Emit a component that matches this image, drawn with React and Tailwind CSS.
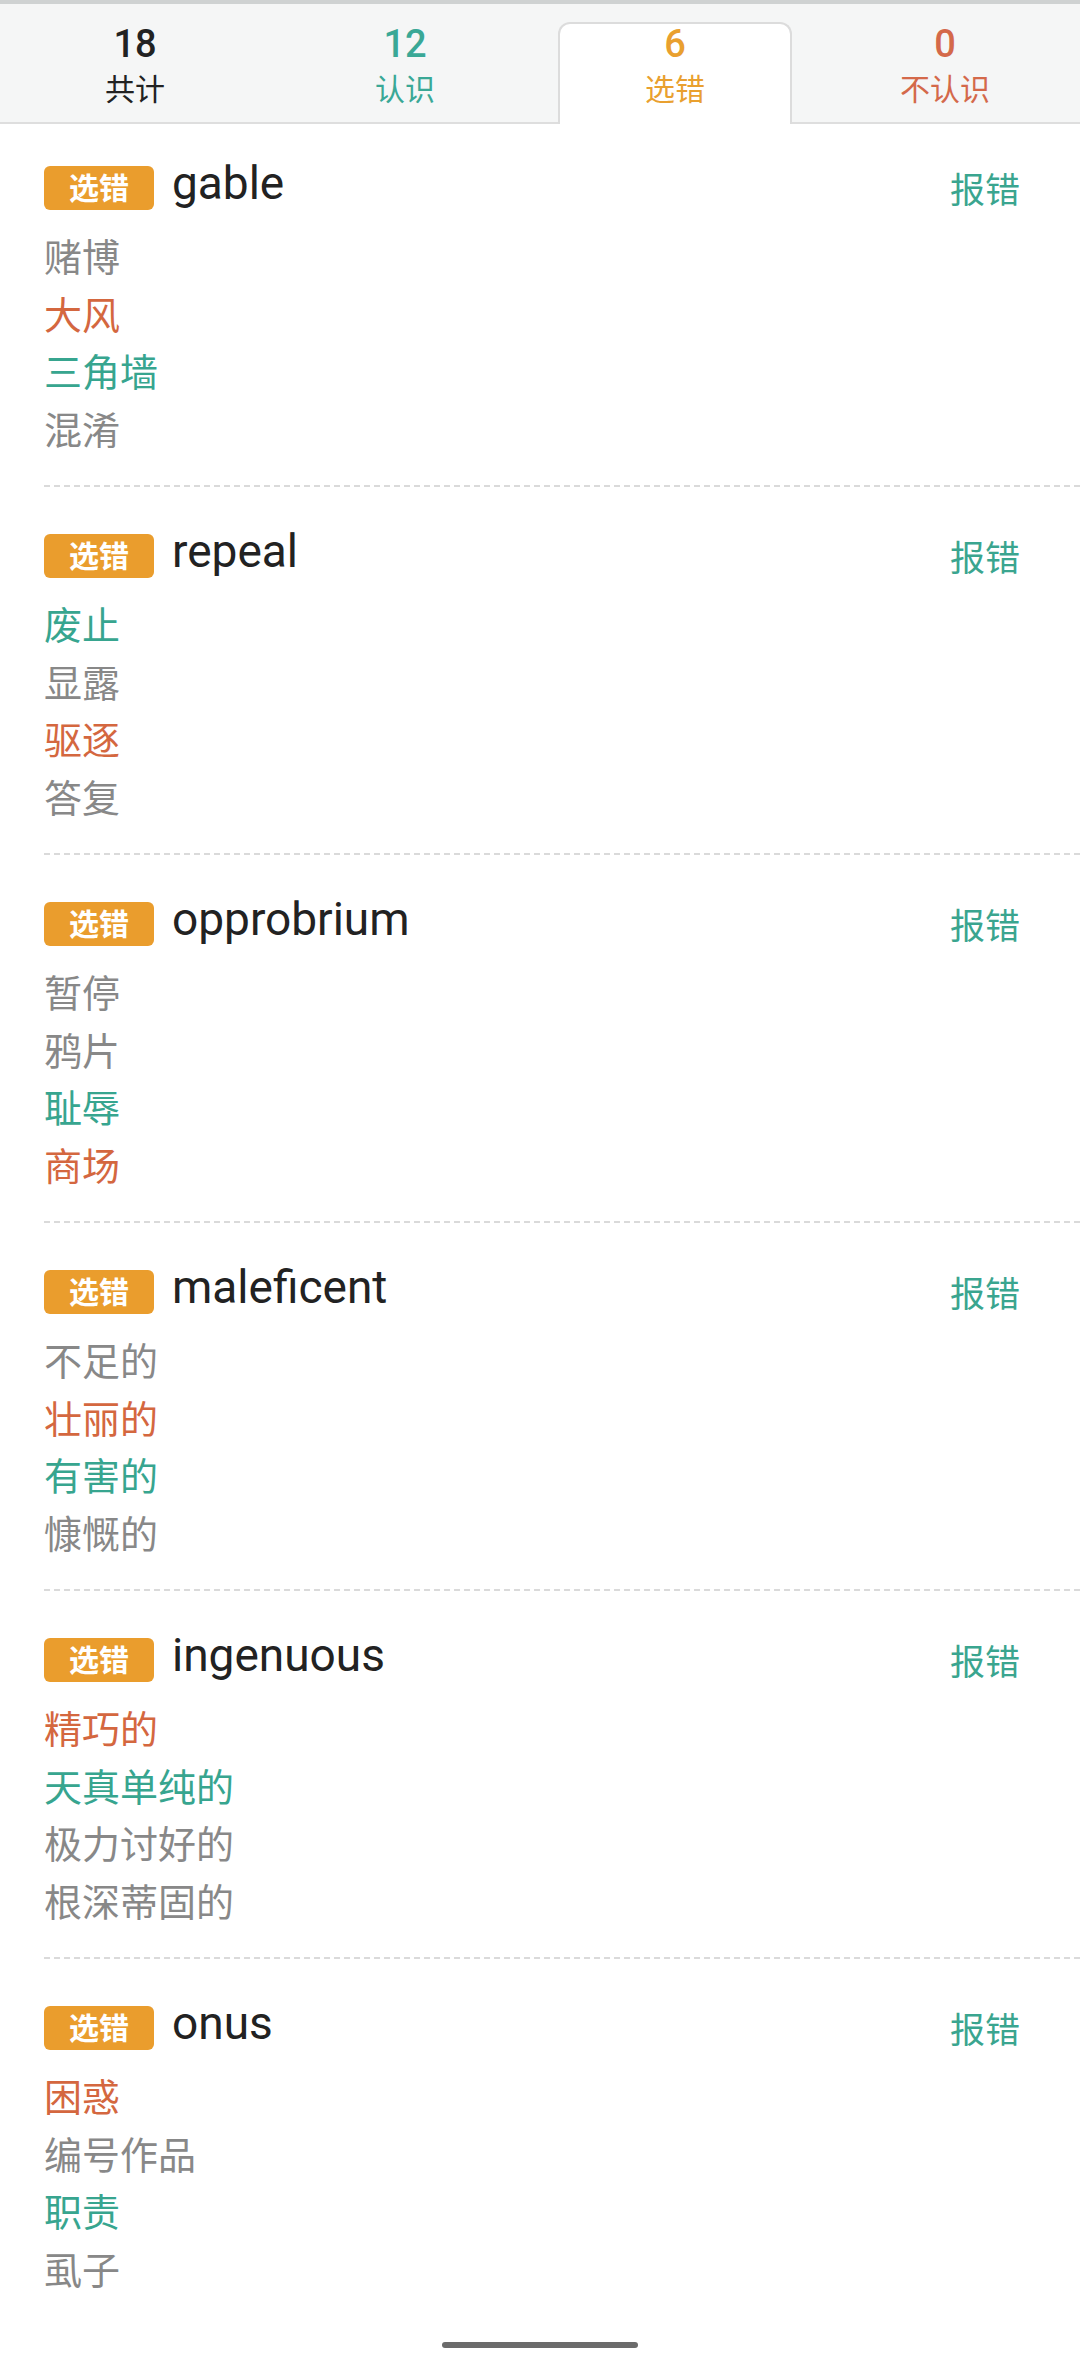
const tabs = [
  { count: 18, label: '共计', color: 'text-[#222222]' },
  { count: 12, label: '认识', color: 'text-[#3aa896]' },
  { count: 6, label: '选错', color: 'text-[#e9a02f]', active: true },
  { count: 0, label: '不认识', color: 'text-[#d4694a]' },
];

const G = 'text-[#888888]';
const R = 'text-[#d4673f]';
const T = 'text-[#37a58f]';

const words = [
  { word: 'gable', meanings: [['赌博', G], ['大风', R], ['三角墙', T], ['混淆', G]] },
  { word: 'repeal', meanings: [['废止', T], ['显露', G], ['驱逐', R], ['答复', G]] },
  { word: 'opprobrium', meanings: [['暂停', G], ['鸦片', G], ['耻辱', T], ['商场', R]] },
  { word: 'maleficent', meanings: [['不足的', G], ['壮丽的', R], ['有害的', T], ['慷慨的', G]] },
  { word: 'ingenuous', meanings: [['精巧的', R], ['天真单纯的', T], ['极力讨好的', G], ['根深蒂固的', G]] },
  { word: 'onus', meanings: [['困惑', R], ['编号作品', G], ['职责', T], ['虱子', G]] },
];

const font = { fontFamily: 'Roboto, "Noto Sans CJK SC", sans-serif' };

const WordCard = ({ item, first }) => (
  <div className={`ml-[44px] pr-[60px] pb-[25px] ${first ? 'pt-[42px]' : 'pt-[47px] border-t-2 border-dashed border-[#dadada]'}`}>
    <div className="flex items-center h-[44px]">
      <span className="w-[110px] h-[44px] rounded-[6px] bg-[#ea9d2d] text-white text-[30px] font-bold flex items-center justify-center">
        选错
      </span>
      <span className="ml-[18px] mb-[10px] text-[46px] text-[#222222] leading-none">{item.word}</span>
      <span className="ml-auto mt-[8px] text-[35px] text-[#3aa58f]">报错</span>
    </div>
    <div className="mt-[20px]">
      {item.meanings.map(([m, c]) => (
        <div key={m} className={`text-[38px] leading-[57.5px] ${c}`}>{m}</div>
      ))}
    </div>
  </div>
);

export default function App() {
  return (
    <div className="w-[1080px] min-h-[2365px] bg-white relative" style={font}>
      {/* header tabs */}
      <div className="h-[124px] bg-[#f5f6f6] border-t-4 border-[#cfd2d2] border-b-2 border-b-[#dedede] grid grid-cols-4 items-end">
        {tabs.map((t) => (
          <div
            key={t.label}
            className={`flex flex-col items-center h-[100px] ${t.active ? 'mx-[18px] -mb-[2px] h-[102px] bg-white border-2 border-b-0 border-[#dcdcdc] rounded-t-[12px]' : 'pt-[2px]'} ${t.color}`}
          >
            <span className="text-[38px] font-medium leading-[40px]">{t.count}</span>
            <span className="text-[30px] leading-[40px] mt-[6px]">{t.label}</span>
          </div>
        ))}
      </div>

      {words.map((item, i) => (
        <WordCard key={item.word} item={item} first={i === 0} />
      ))}

      {/* home indicator */}
      <div className="absolute bottom-[17px] left-[442px] w-[196px] h-[6px] rounded-full bg-[#6b6b6b]" />
    </div>
  );
}
